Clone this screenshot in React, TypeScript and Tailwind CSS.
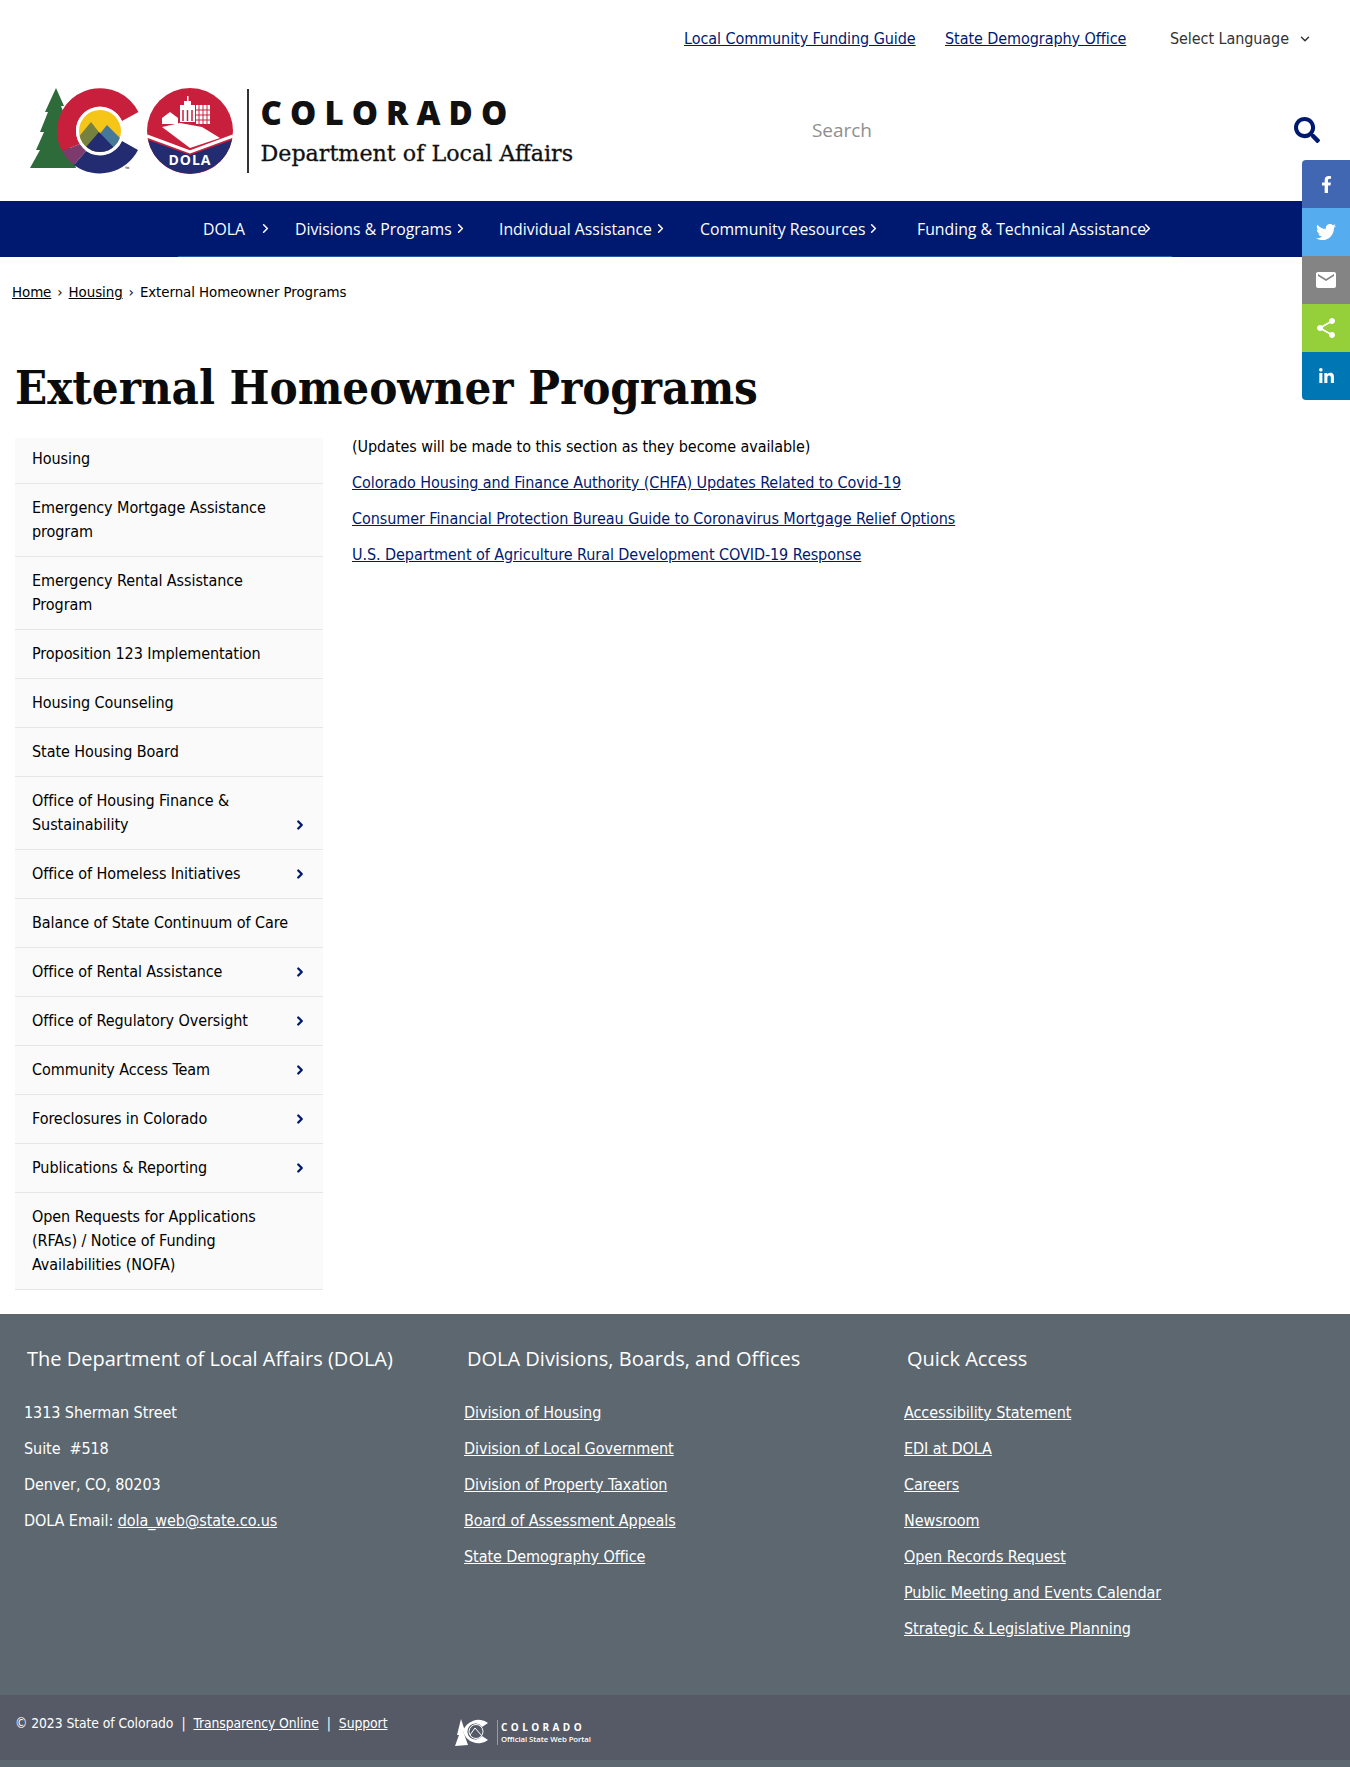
import { ChevronDown, ChevronRight } from "lucide-react"
import { FaFacebookF, FaLinkedinIn, FaSearch, FaTwitter } from "react-icons/fa"
import { MdEmail, MdShare } from "react-icons/md"

const body = "font-['DejaVu_Sans_Condensed','Lato',sans-serif]"
const heading = "font-['Open_Sans',sans-serif]"

const navItems = [
  { label: "DOLA", cls: "w-[92px]", gap: "ml-[13px]" },
  { label: "Divisions & Programs", cls: "w-[204px]", gap: "ml-[1px]" },
  { label: "Individual Assistance", cls: "w-[201px]", gap: "ml-[1px]" },
  { label: "Community Resources", cls: "w-[217px]", gap: "ml-[1px]" },
  { label: "Funding & Technical Assistance", cls: "w-[240px]", gap: "-ml-[6px]" },
]

const sideItems = [
  { label: "Housing" },
  { label: "Emergency Mortgage Assistance program" },
  { label: "Emergency Rental Assistance Program" },
  { label: "Proposition 123 Implementation" },
  { label: "Housing Counseling" },
  { label: "State Housing Board" },
  { label: "Office of Housing Finance & Sustainability", more: true },
  { label: "Office of Homeless Initiatives", more: true },
  { label: "Balance of State Continuum of Care" },
  { label: "Office of Rental Assistance", more: true },
  { label: "Office of Regulatory Oversight", more: true },
  { label: "Community Access Team", more: true },
  { label: "Foreclosures in Colorado", more: true },
  { label: "Publications & Reporting", more: true },
  { label: "Open Requests for Applications (RFAs) / Notice of Funding Availabilities (NOFA)" },
]

const divisions = [
  "Division of Housing",
  "Division of Local Government",
  "Division of Property Taxation",
  "Board of Assessment Appeals",
  "State Demography Office",
]

const quickLinks = [
  "Accessibility Statement",
  "EDI at DOLA",
  "Careers",
  "Newsroom",
  "Open Records Request",
  "Public Meeting and Events Calendar",
  "Strategic & Legislative Planning",
]

function StateLogo() {
  return (
    <svg viewBox="0 0 204 86" className="h-[86px] w-[204px] shrink-0" aria-hidden="true">
      <defs>
        <clipPath id="peaks">
          <circle cx="70" cy="43" r="21" />
        </clipPath>
      </defs>
      {/* tree */}
      <path d="M26 0 L34 18 L31 18 L38 36 L34 36 L42 54 L38 54 L46 80 L0 80 L10 62 L6 62 L14 44 L10 44 L18 24 L15 24 Z" fill="#2e6b3a" />
      {/* C */}
      <path d="M108.500 24 A43 43 0 0 0 27 43 A43 43 0 0 0 32 63 L50 56 A24 24 0 0 1 46 43 A24 24 0 0 1 92 33 Z" fill="#c8203c" />
      <path d="M32 63 A43 43 0 0 0 44 77 L56 63 L50 56 Z" fill="#7d3a6c" />
      <path d="M44 77 A43 43 0 0 0 108 62 L92 53 A24 24 0 0 1 56 63 Z" fill="#232c70" />
      <circle cx="70" cy="43" r="24" fill="#fff" />
      <g clipPath="url(#peaks)">
        <rect x="49" y="22" width="42" height="42" fill="#f5c518" />
        <path d="M46 52 L61 34 L72 48 L64 66 L46 66 Z" fill="#76803f" />
        <path d="M68 48 L77 37 L94 54 L80 66 Z" fill="#46789a" />
        <path d="M50 66 L69 44 L90 66 Z" fill="#232c70" />
      </g>
      <text x="95" y="83" fontSize="6" fill="#333" fontFamily="Open Sans">™</text>
      {/* DOLA seal */}
      <circle cx="160" cy="43" r="43" fill="#c8203c" />
      <path d="M118 52 L160 67 L202 52 A43 43 0 0 1 118 52 Z" fill="#232c70" />
      <path d="M117 48 L160 64 L203 48" fill="none" stroke="#fff" strokeWidth="3" />
      <path d="M132 39 L150 35 L172 39 L190 50 L160 60 Z" fill="#fff" />
      <rect x="150" y="17" width="15" height="17" fill="#fff" />
      <rect x="154" y="13" width="7" height="5" fill="#fff" />
      <rect x="157" y="8" width="1.5" height="6" fill="#fff" />
      <path d="M166 17 H180 V36 H166 Z" fill="#fff" />
      <path d="M169 17 V36 M173 17 V36 M177 17 V36 M166 22 H180 M166 27 H180 M166 32 H180" stroke="#c8203c" strokeWidth="1" />
      <path d="M132 30 L140 24 L148 30 V36 H132 Z" fill="#fff" />
      <path d="M153 22 V33 M157.500 22 V33 M162 22 V33" stroke="#c8203c" strokeWidth="1.500" />
      <text x="160" y="77" textAnchor="middle" fontSize="14" fontWeight="700" letterSpacing="1" fill="#fff" fontFamily="Open Sans">DOLA</text>
    </svg>
  )
}

function PortalLogo() {
  return (
    <div className="flex items-center self-start pt-[18px]">
      <svg viewBox="0 0 36 38" className="h-[38px] w-9 shrink-0" aria-hidden="true">
        <path d="M6 6 L10 18 L8 18 L13 32 L0 33 L4 22 L2 22 Z" fill="#fff" />
        <path d="M33 10 A16 16 0 0 0 8 18.500 A16 16 0 0 0 33 27 L27 23 A8 8 0 1 1 27 14 Z" fill="#fff" />
        <circle cx="21" cy="18.500" r="7" fill="none" stroke="#fff" strokeWidth="1" />
        <path d="M15 22 L20 15 L27 23" fill="none" stroke="#fff" strokeWidth="1" />
      </svg>
      <div className={`ml-[6px] border-l border-white/40 pl-[3px] text-white ${heading}`}>
        <div className="text-[10px] leading-[14px] font-bold tracking-[3.400px]">COLORADO</div>
        <div className="text-[7.800px] leading-[11px] font-semibold whitespace-nowrap">Official State Web Portal</div>
      </div>
    </div>
  )
}

function ShareBar() {
  return (
    <div className="absolute top-[160px] right-0 z-10 flex w-12 flex-col overflow-hidden rounded-l-[4px] text-white">
      <div className="flex h-12 items-center justify-center bg-[#4267b2]"><FaFacebookF size={17} /></div>
      <div className="flex h-12 items-center justify-center bg-[#55acee]"><FaTwitter size={20} /></div>
      <div className="flex h-12 items-center justify-center bg-[#848484]"><MdEmail size={24} /></div>
      <div className="flex h-12 items-center justify-center bg-[#95d03a]"><MdShare size={24} /></div>
      <div className="flex h-12 items-center justify-center bg-[#0077b5]"><FaLinkedinIn size={17} /></div>
    </div>
  )
}

export default function App() {
  return (
    <div className={`relative h-[1767px] w-full overflow-hidden bg-white text-[16px] leading-6 tracking-[-0.07px] text-black ${body}`}>
      <ShareBar />

      <div className="flex h-[78px] items-center pl-[684px]">
        <a href="#" className="w-[261px] text-[#001970] underline">Local Community Funding Guide</a>
        <a href="#" className="w-[225px] text-[#001970] underline">State Demography Office</a>
        <span className="w-[128px] text-[#333]">Select Language</span>
        <ChevronDown strokeWidth={2.500} className="size-3.5 text-[#333]" />
      </div>

      <header className="flex h-[123px] items-start pl-[30px]">
        <div className="mt-[10px] flex items-center">
          <StateLogo />
          <div className="ml-[13px] h-[84px] w-[1.500px] bg-[#333]" />
          <div className="ml-[12px] -mt-[2px]">
            <div className={`text-[33px] leading-[40px] font-extrabold tracking-[8.100px] text-[#111] ${heading}`}>COLORADO</div>
            <div className="mt-[5px] font-['DejaVu_Serif',serif] text-[22.200px] leading-[30px] tracking-normal text-[#111] [-webkit-text-stroke:0.3px_#111]">Department of Local Affairs</div>
          </div>
        </div>
        <div className={`ml-auto mt-[39px] flex w-[538px] items-center pr-[30px] ${heading}`}>
          <span className="text-[19px] text-[#8f8f8f]">Search</span>
          <FaSearch size={26} className="ml-auto text-[#001970]" />
        </div>
      </header>

      <nav className={`h-[56px] bg-[#001970] text-[15.800px] tracking-normal ${heading}`}>
        <ul className="ml-[178px] flex h-full w-[994px] items-center border-b border-[#2a5a9e] pl-[25px] text-white">
          {navItems.map((item) => (
            <li key={item.label} className={`flex items-center ${item.cls}`}>
              <span className="whitespace-nowrap">{item.label}</span>
              <ChevronRight size={15} strokeWidth={2.500} className={`shrink-0 ${item.gap}`} />
            </li>
          ))}
        </ul>
      </nav>

      <div className="mt-[23px] flex h-6 items-center pl-3 text-[14.900px]">
        <a href="#" className="underline">Home</a>
        <span className="mx-[6px]">›</span>
        <a href="#" className="underline">Housing</a>
        <span className="mx-[6px]">›</span>
        <span>External Homeowner Programs</span>
      </div>

      <h1 className="mt-[48px] ml-[15px] font-['DejaVu_Serif_Condensed','DejaVu_Serif',serif] text-[47px] leading-[72px] font-bold tracking-[-0.05px] text-[#0b0b0b]">
        External Homeowner Programs
      </h1>

      <div className="mt-[11px] flex h-[879px] items-start pl-[15px]">
        <ul className="mt-[3px] w-[308px] shrink-0">
          {sideItems.map((item) => (
            <li key={item.label} className={`relative border-b border-[#e6e6e6] bg-[#fafafa] py-3 pl-[17px] first:pt-[9px] ${item.more ? "pr-[52px]" : "pr-[21px]"}`}>
              {item.label}
              {item.more && <ChevronRight size={14} strokeWidth={4} className="absolute right-[16px] bottom-[17px] text-[#001970]" />}
            </li>
          ))}
        </ul>
        <div className="ml-[29px]">
          <p className="mb-3">(Updates will be made to this section as they become available)</p>
          <p className="mb-3"><a href="#" className="text-[#001970] underline">Colorado Housing and Finance Authority (CHFA) Updates Related to Covid-19</a></p>
          <p className="mb-3"><a href="#" className="text-[#001970] underline">Consumer Financial Protection Bureau Guide to Coronavirus Mortgage Relief Options</a></p>
          <p><a href="#" className="text-[#001970] underline">U.S. Department of Agriculture Rural Development COVID-19 Response</a></p>
        </div>
      </div>

      <footer className="h-[453px] bg-[#5c6770] text-white">
        <div className="grid h-[381px] grid-cols-[440px_440px_1fr] pt-[31px] pl-6">
          <div>
            <h2 className={`ml-[3px] text-[20px] leading-[28px] tracking-normal ${heading}`}>The Department of Local Affairs (DOLA)</h2>
            <ul className="mt-[28px] space-y-3">
              <li>1313 Sherman Street</li>
              <li>Suite &nbsp;#518</li>
              <li>Denver, CO, 80203</li>
              <li>DOLA Email: <a href="#" className="underline">dola_web@state.co.us</a></li>
            </ul>
          </div>
          <div>
            <h2 className={`ml-[3px] text-[20px] leading-[28px] tracking-normal ${heading}`}>DOLA Divisions, Boards, and Offices</h2>
            <ul className="mt-[28px] space-y-3">
              {divisions.map((link) => (
                <li key={link}><a href="#" className="underline">{link}</a></li>
              ))}
            </ul>
          </div>
          <div>
            <h2 className={`ml-[3px] text-[20px] leading-[28px] tracking-normal ${heading}`}>Quick Access</h2>
            <ul className="mt-[28px] space-y-3">
              {quickLinks.map((link) => (
                <li key={link}><a href="#" className="underline">{link}</a></li>
              ))}
            </ul>
          </div>
        </div>
        <div className="flex h-[65px] items-center bg-[#555a66] pl-[15px] text-[13.800px]">
          <div className="flex w-[440px] items-center -mt-[9px]">
            <span>© 2023 State of Colorado</span>
            <span className="mx-[8px]">|</span>
            <a href="#" className="underline">Transparency Online</a>
            <span className="mx-[8px]">|</span>
            <a href="#" className="underline">Support</a>
          </div>
          <PortalLogo />
        </div>
      </footer>
    </div>
  )
}
